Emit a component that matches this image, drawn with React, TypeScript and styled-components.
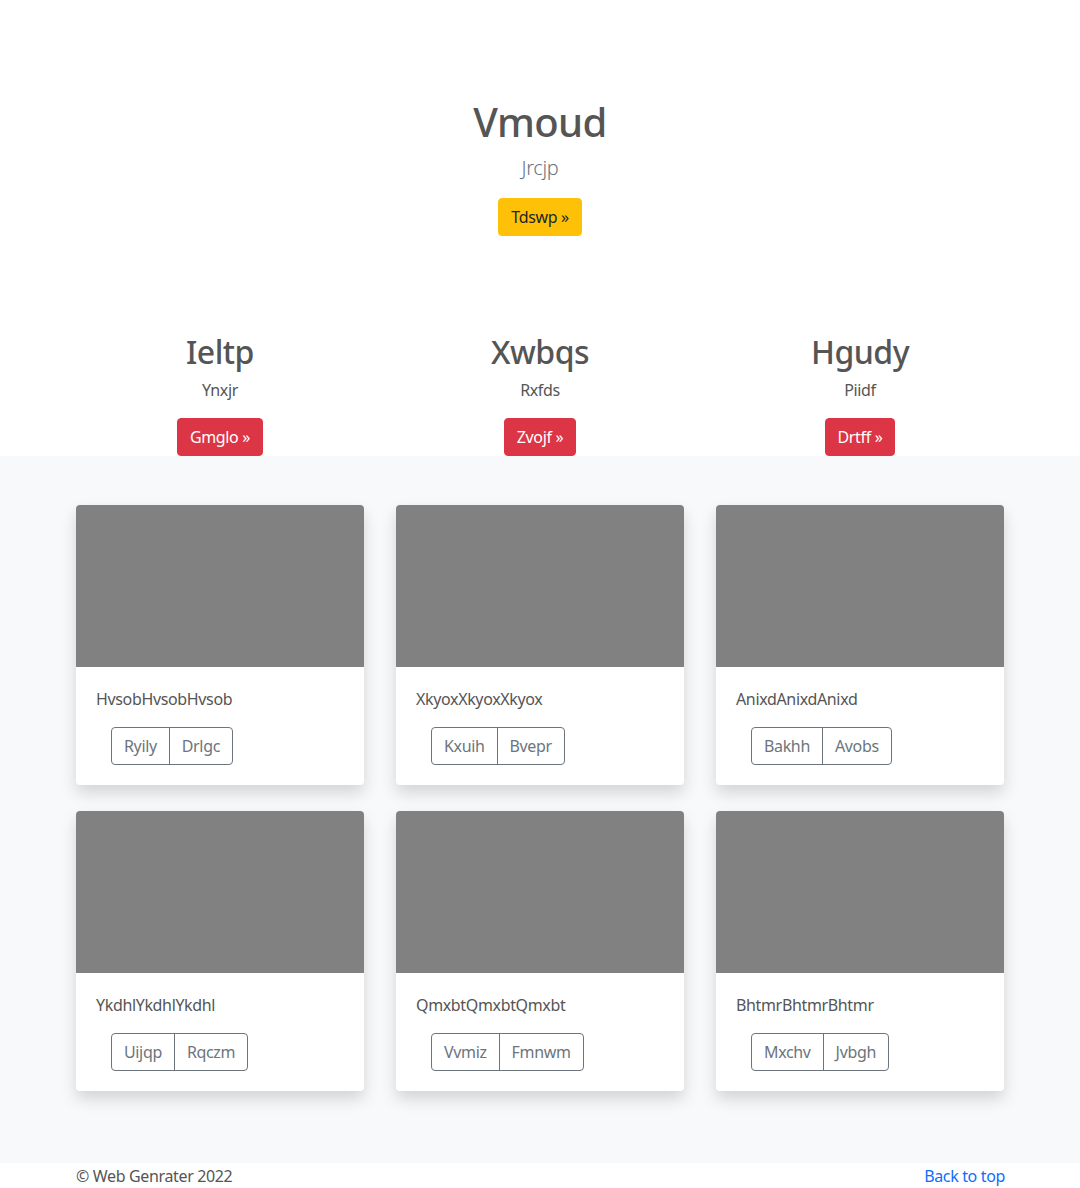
import styled, { createGlobalStyle } from 'styled-components';

const GlobalStyle = createGlobalStyle`
  * {
    box-sizing: border-box;
  }
  body {
    margin: 0;
    background: #fff;
    color: #555;
    font-family: 'Noto Sans', 'Open Sans', sans-serif;
    font-size: 16px;
    line-height: 1.5;
    letter-spacing: -0.35px;
  }
`;

const features = [
  { title: 'Ieltp', text: 'Ynxjr', button: 'Gmglo' },
  { title: 'Xwbqs', text: 'Rxfds', button: 'Zvojf' },
  { title: 'Hgudy', text: 'Piidf', button: 'Drtff' },
];

const cards = [
  { text: 'HvsobHvsobHvsob', actions: ['Ryily', 'Drlgc'] },
  { text: 'XkyoxXkyoxXkyox', actions: ['Kxuih', 'Bvepr'] },
  { text: 'AnixdAnixdAnixd', actions: ['Bakhh', 'Avobs'] },
  { text: 'YkdhlYkdhlYkdhl', actions: ['Uijqp', 'Rqczm'] },
  { text: 'QmxbtQmxbtQmxbt', actions: ['Vvmiz', 'Fmnwm'] },
  { text: 'BhtmrBhtmrBhtmr', actions: ['Mxchv', 'Jvbgh'] },
];

export default function App() {
  return (
    <>
      <GlobalStyle />
      <Hero>
        <HeroTitle>Vmoud</HeroTitle>
        <Lead>Jrcjp</Lead>
        <Button $variant="warning">Tdswp »</Button>
      </Hero>
      <Features>
        {features.map((item) => (
          <Feature key={item.title}>
            <FeatureTitle>{item.title}</FeatureTitle>
            <FeatureText>{item.text}</FeatureText>
            <Button $variant="danger">{item.button} »</Button>
          </Feature>
        ))}
      </Features>
      <Album>
        <CardGrid>
          {cards.map((card) => (
            <Card key={card.text}>
              <Thumb />
              <CardBody>
                <CardText>{card.text}</CardText>
                <BtnGroup>
                  {card.actions.map((a) => (
                    <GroupButton key={a}>{a}</GroupButton>
                  ))}
                </BtnGroup>
              </CardBody>
            </Card>
          ))}
        </CardGrid>
      </Album>
      <Footer>
        <span>© Web Genrater 2022</span>
        <TopLink href="#">Back to top</TopLink>
      </Footer>
    </>
  );
}

const Hero = styled.section`
  display: flex;
  flex-direction: column;
  align-items: center;
  padding-top: 98px;
`;

const HeroTitle = styled.h1`
  margin: 0;
  font-size: 40px;
  font-weight: 500;
  line-height: 1.2;
  letter-spacing: -0.6px;
  color: #555;
`;

const Lead = styled.p`
  margin: 7px 0 15px;
  font-size: 20px;
  font-weight: 300;
  color: #6c757d;
`;

const Button = styled.button<{ $variant: 'warning' | 'danger' }>`
  font-family: inherit;
  font-size: 16px;
  line-height: 1.5;
  letter-spacing: inherit;
  padding: 6px 12px;
  border-radius: 4px;
  border: 1px solid ${(p) => (p.$variant === 'warning' ? '#ffc107' : '#dc3545')};
  background: ${(p) => (p.$variant === 'warning' ? '#ffc107' : '#dc3545')};
  color: ${(p) => (p.$variant === 'warning' ? '#212529' : '#fff')};
  cursor: pointer;
`;

const Features = styled.section`
  width: 960px;
  margin: 0 auto;
  padding-top: 97px;
  display: grid;
  grid-template-columns: repeat(3, 1fr);
`;

const Feature = styled.div`
  display: flex;
  flex-direction: column;
  align-items: center;
`;

const FeatureTitle = styled.h2`
  margin: 0;
  font-size: 32px;
  font-weight: 500;
  line-height: 1.2;
  letter-spacing: -0.5px;
  color: #555;
`;

const FeatureText = styled.p`
  margin: 7px 0 16px;
  color: #555;
`;

const Album = styled.section`
  background: #f8f9fa;
  padding: 49px 0 72px;
`;

const CardGrid = styled.div`
  width: 928px;
  margin: 0 auto;
  display: grid;
  grid-template-columns: repeat(3, 1fr);
  column-gap: 32px;
  row-gap: 26px;
`;

const Card = styled.div`
  background: #fff;
  border-radius: 4px;
  overflow: hidden;
  box-shadow: 0 8px 16px rgba(0, 0, 0, 0.15);
`;

const Thumb = styled.div`
  height: 162px;
  background: #818181;
`;

const CardBody = styled.div`
  padding: 20px;
`;

const CardText = styled.p`
  margin: 0 0 16px;
  color: #555;
`;

const BtnGroup = styled.div`
  display: inline-flex;
  margin-left: 15px;
  border: 1px solid #6c757d;
  border-radius: 4px;
  overflow: hidden;
`;

const GroupButton = styled.button`
  font-family: inherit;
  font-size: 16px;
  line-height: 1.5;
  letter-spacing: inherit;
  padding: 6px 12px;
  background: transparent;
  border: none;
  color: #6c757d;
  & + & {
    border-left: 1px solid #6c757d;
  }
`;

const Footer = styled.footer`
  width: 930px;
  margin: 0 auto;
  display: flex;
  justify-content: space-between;
  padding: 1px 0 0 1px;
  color: #555;
  font-size: 16px;
`;

const TopLink = styled.a`
  color: #0d6efd;
  text-decoration: none;
`;
